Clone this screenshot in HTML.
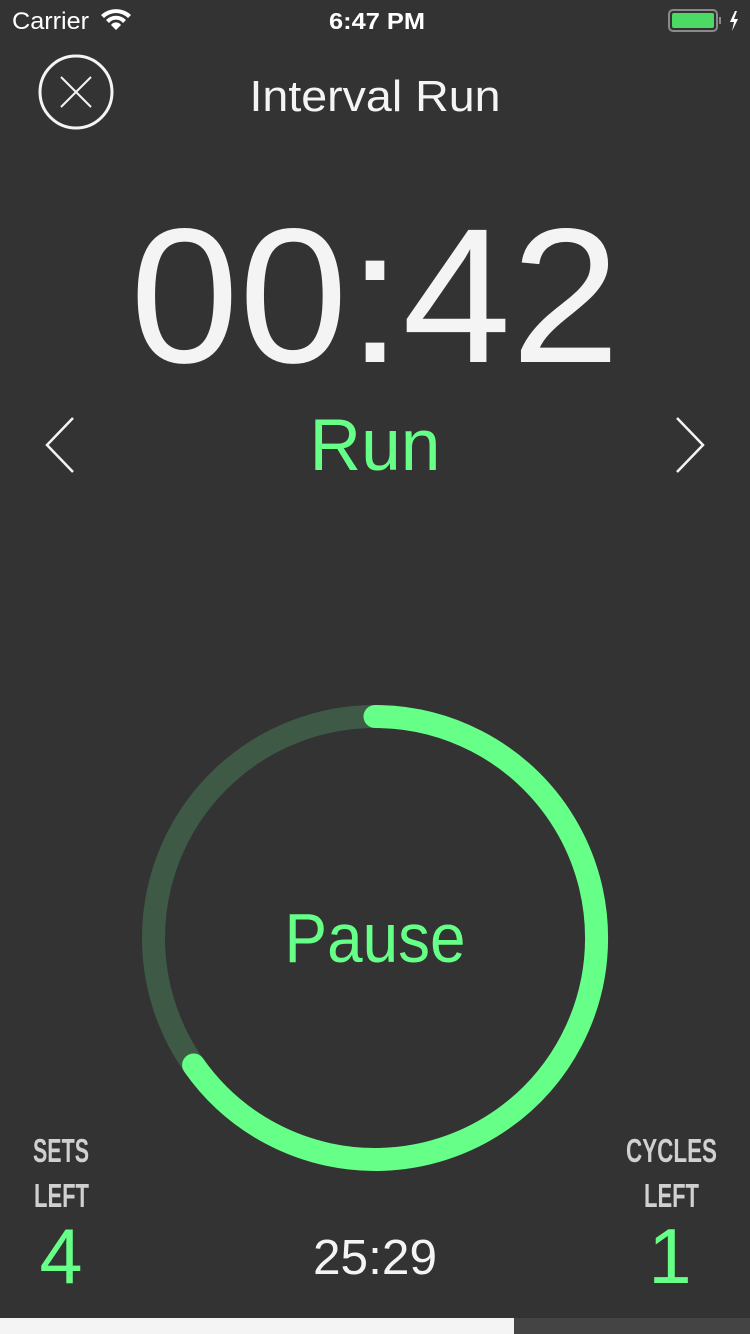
<!DOCTYPE html>
<html><head><meta charset="utf-8"><style>
html,body{margin:0;padding:0;background:#333333;width:750px;height:1334px;overflow:hidden}
svg{display:block}
text{font-family:"Liberation Sans",sans-serif}
</style></head><body>
<svg width="750" height="1334" viewBox="0 0 750 1334" xmlns="http://www.w3.org/2000/svg">
<rect width="750" height="1334" fill="#333333"/>
<text x="12" y="29" font-size="24" fill="#fff" textLength="77" lengthAdjust="spacingAndGlyphs">Carrier</text>
<g fill="#fff">
<path d="M101 15 a22 22 0 0 1 30 0 l-3 3 a17 17 0 0 0 -24 0z"/>
<path d="M106 20 a14 14 0 0 1 20 0 l-3 3 a9 9 0 0 0 -14 0z"/>
<path d="M111 25 a6 6 0 0 1 10 0 l-5 5z"/>
</g>
<text x="329" y="29" font-size="23" font-weight="bold" fill="#fff" textLength="96" lengthAdjust="spacingAndGlyphs">6:47 PM</text>
<rect x="669" y="10" width="48" height="21" rx="4" fill="none" stroke="#8a8a8a" stroke-width="2"/>
<rect x="672" y="13" width="42" height="15" rx="2" fill="#4cd964"/>
<rect x="719" y="17" width="2" height="7" fill="#8a8a8a"/>
<path d="M735 11 l-5 11 h4 l-2 9 l6 -12 h-4 l3 -8z" fill="#fff"/>
<circle cx="76" cy="92" r="36" fill="none" stroke="#f4f4f4" stroke-width="3"/>
<path d="M61 77 L91 107 M91 77 L61 107" stroke="#f4f4f4" stroke-width="2"/>
<text x="375" y="111" font-size="44" fill="#f4f4f4" text-anchor="middle" textLength="251" lengthAdjust="spacingAndGlyphs">Interval Run</text>
<text x="375" y="362" font-size="192" fill="#f4f4f4" text-anchor="middle" textLength="490" lengthAdjust="spacingAndGlyphs">00:42</text>
<path d="M73 418 L47 445 L73 472" fill="none" stroke="#f4f4f4" stroke-width="2.5"/>
<path d="M677 418 L703 445 L677 472" fill="none" stroke="#f4f4f4" stroke-width="2.5"/>
<text x="375" y="470" font-size="73" fill="#66ff88" text-anchor="middle" textLength="131" lengthAdjust="spacingAndGlyphs">Run</text>
<circle cx="375" cy="938" r="221.5" fill="none" stroke="#3e5a46" stroke-width="23"/>
<path d="M375 716.5 A221.5 221.5 0 1 1 193.6 1065" fill="none" stroke="#66ff88" stroke-width="23" stroke-linecap="round"/>
<text x="375" y="962" font-size="70" fill="#66ff88" text-anchor="middle" textLength="181" lengthAdjust="spacingAndGlyphs">Pause</text>
<g fill="#d0d0d0" font-weight="bold" font-size="33">
<text x="33" y="1162" textLength="56" lengthAdjust="spacingAndGlyphs">SETS</text>
<text x="34" y="1207" textLength="55" lengthAdjust="spacingAndGlyphs">LEFT</text>
<text x="626" y="1162" textLength="91" lengthAdjust="spacingAndGlyphs">CYCLES</text>
<text x="644" y="1207" textLength="55" lengthAdjust="spacingAndGlyphs">LEFT</text>
</g>
<text x="61" y="1283" font-size="78" fill="#66ff88" text-anchor="middle" textLength="43" lengthAdjust="spacingAndGlyphs">4</text>
<text x="670" y="1283" font-size="78" fill="#66ff88" text-anchor="middle">1</text>
<text x="375" y="1274" font-size="49" fill="#f4f4f4" text-anchor="middle" textLength="124" lengthAdjust="spacingAndGlyphs">25:29</text>
<rect x="0" y="1318" width="514" height="16" fill="#f4f4f4"/>
<rect x="514" y="1318" width="236" height="16" fill="#444444"/>
</svg>
</body></html>
